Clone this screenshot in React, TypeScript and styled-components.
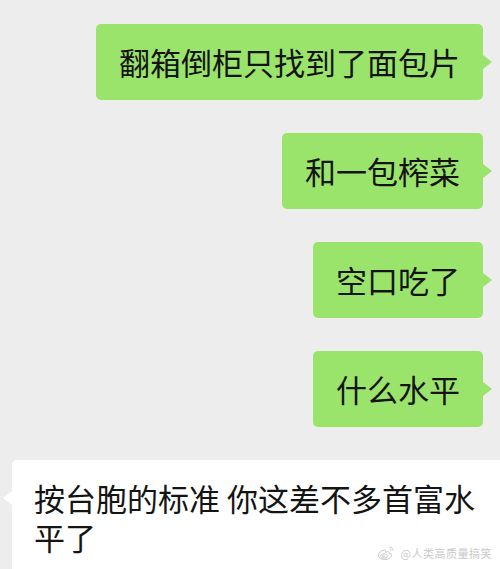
import React from 'react';
import styled, {createGlobalStyle} from 'styled-components';

const GlobalStyle = createGlobalStyle`
  html, body {
    margin: 0;
    padding: 0;
    background: #ededed;
  }
`

const SChat = styled.div`
  position: relative;
  width: 500px;
  height: 569px;
  overflow: hidden;
  box-sizing: border-box;
  padding-top: 24px;
  background: #ededed;
  font-family: "Noto Sans CJK SC", "Noto Sans", sans-serif;
  display: flex;
  flex-direction: column;
  gap: 33px;
`

const SRow = styled.div<{ $mine?: boolean }>`
  display: flex;
  justify-content: ${p => (p.$mine ? 'flex-end' : 'flex-start')};
  padding: ${p => (p.$mine ? '0 17px 0 0' : '0 0 0 12px')};
`

const SBubble = styled.div<{ $mine?: boolean }>`
  position: relative;
  box-sizing: border-box;
  background: ${p => (p.$mine ? '#9be46c' : '#ffffff')};
  color: #141414;
  font-size: 31px;
  line-height: ${p => (p.$mine ? '36px' : '39px')};
  padding: ${p => (p.$mine ? '20px 23px' : '18px 20px 20px 22px')};
  border-radius: 5px;
  ${p => (p.$mine ? '' : 'width: 500px; margin-right: -12px;')}

  &::after {
    content: '';
    position: absolute;
    top: 31px;
    ${p => (p.$mine ? 'right: -9px;' : 'left: -9px;')}
    border-style: solid;
    border-width: 7px ${p => (p.$mine ? '0 7px 9px' : '9px 7px 0')};
    border-color: transparent;
    ${p => (p.$mine ? 'border-left-color: #9be46c;' : 'border-right-color: #ffffff;')}
  }
`

const SWatermark = styled.div`
  position: absolute;
  right: 8px;
  bottom: 8px;
  display: flex;
  align-items: center;
  gap: 6px;
  color: #c9c9c9;
  font-size: 11px;
  letter-spacing: 0.5px;

  svg {
    width: 18px;
    height: 16px;
  }
`

const messages = [
    {mine: true, text: '翻箱倒柜只找到了面包片'},
    {mine: true, text: '和一包榨菜'},
    {mine: true, text: '空口吃了'},
    {mine: true, text: '什么水平'},
    {mine: false, text: '按台胞的标准 你这差不多首富水平了'},
]

const WeiboLogo = () => (
    <svg viewBox="0 0 36 32" fill="none" stroke="#c9c9c9" strokeWidth="2">
        <path d="M14 10c-6 1-11 6-11 11 0 5 6 8 12 8 8 0 14-4 14-9 0-3-3-4-5-3 1-3-1-5-5-3-2 1-3 1-2-1 1-3-1-4-3-3z"/>
        <ellipse cx="14" cy="22" rx="7" ry="4.5"/>
        <circle cx="13" cy="22.5" r="1.8"/>
        <path d="M25 4c4 0 7 3 7 7"/>
        <path d="M25 8c2 0 3 1 3 3"/>
    </svg>
)

const App = () => {
    return (
        <SChat>
            <GlobalStyle/>
            {messages.map((m, index) => (
                <SRow $mine={m.mine} key={index}>
                    <SBubble $mine={m.mine}>{m.text}</SBubble>
                </SRow>
            ))}
            <SWatermark>
                <WeiboLogo/>
                <span>@人类高质量搞笑</span>
            </SWatermark>
        </SChat>
    );
};

export default App;
